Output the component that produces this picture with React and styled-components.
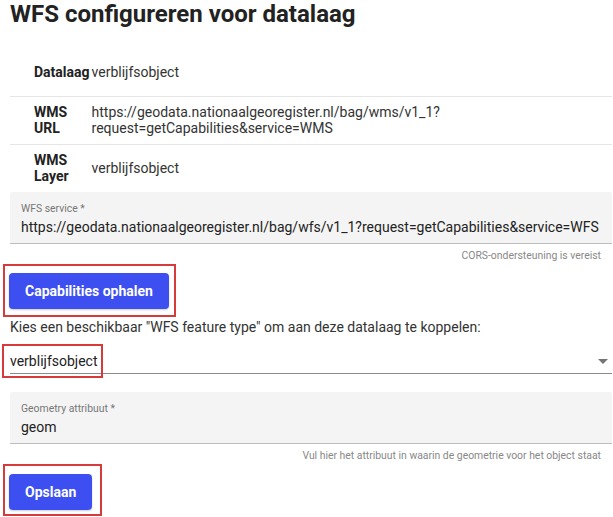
import React from "react";
import styled, { createGlobalStyle } from "styled-components";

const Global = createGlobalStyle`
  html, body { margin: 0; padding: 0; background: #fff; }
  body { font-family: Roboto, "Noto Sans", "Liberation Sans", sans-serif; color: rgba(0,0,0,0.87); }
`;

const Page = styled.div`
  padding: 0 1px 0 10px;
  width: 613px;
  box-sizing: border-box;
`;

const Title = styled.h1`
  margin: 0 0 20px;
  font-size: 24px;
  line-height: 28px;
  font-weight: 700;
  color: #222;
`;

const InfoTable = styled.table`
  width: 100%;
  border-collapse: collapse;
  font-size: 14px;
  line-height: 16px;
`;

const Row = styled.tr`
  height: 48px;
  border-bottom: ${(p) => (p.$last ? "none" : "1px solid #e6e6e6")};
`;

const LabelCell = styled.th`
  text-align: left;
  font-weight: 700;
  padding: 0 2px 0 24px;
  width: 1px;
  white-space: nowrap;
  color: #222;
  vertical-align: middle;
`;

const ValueCell = styled.td`
  padding: 0;
  color: #333;
  vertical-align: middle;
`;

const Field = styled.div`
  background: #f4f4f4;
  border-bottom: 1px solid #bdbdbd;
  padding: 10px 11px 6px;
  border-radius: 3px 3px 0 0;
`;

const FieldLabel = styled.div`
  font-size: 10.4px;
  line-height: 14px;
  color: #777;
  margin-bottom: 1px;
`;

const FieldValue = styled.div`
  font-size: 14px;
  line-height: 20px;
  color: #222;
  white-space: nowrap;
`;

const Helper = styled.div`
  text-align: right;
  font-size: 10.4px;
  line-height: 14px;
  color: #888;
  margin-top: 5px;
  padding-right: 11px;
`;

const Highlight = styled.div`
  display: inline-block;
  margin: 1px 0 0 -7px;
  border: 2px solid #d63a3a;
  padding: ${(p) => p.$pad};
`;

const Button = styled.button`
  display: block;
  border: none;
  border-radius: 4px;
  background: #3d4ff0;
  color: #fff;
  font-family: inherit;
  font-weight: 700;
  font-size: 14px;
  height: 36px;
  padding: 0 16px;
  box-shadow: 0 1px 2px rgba(0,0,0,0.2);
`;

const Instruction = styled.p`
  margin: 0;
  font-size: 14px;
  line-height: 20px;
  color: #333;
`;

const Select = styled.div`
  position: relative;
  margin-top: 8px;
  display: flex;
  align-items: center;
  justify-content: space-between;
  padding: 6px 4px 2px 0;
  border-bottom: 1px solid #8a8a8a;
  font-size: 14px;
  line-height: 20px;
  color: #222;
`;

const SelectMark = styled.div`
  position: absolute;
  left: -8px;
  top: -1px;
  width: 101px;
  height: 34px;
  border: 2px solid #d63a3a;
  box-sizing: border-box;
`;

const Arrow = styled.span`
  width: 0;
  height: 0;
  border-left: 5px solid transparent;
  border-right: 5px solid transparent;
  border-top: 5px solid #757575;
`;

const Spacer = styled.div`
  height: ${(p) => p.$h}px;
`;

export default function App() {
  return (
    <Page>
      <Global />
      <Title>WFS configureren voor datalaag</Title>
      <InfoTable>
        <tbody>
          <Row>
            <LabelCell>Datalaag</LabelCell>
            <ValueCell>verblijfsobject</ValueCell>
          </Row>
          <Row>
            <LabelCell>
              WMS
              <br />
              URL
            </LabelCell>
            <ValueCell>
              https://geodata.nationaalgeoregister.nl/bag/wms/v1_1?
              <br />
              request=getCapabilities&amp;service=WMS
            </ValueCell>
          </Row>
          <Row $last>
            <LabelCell>
              WMS
              <br />
              Layer
            </LabelCell>
            <ValueCell>verblijfsobject</ValueCell>
          </Row>
        </tbody>
      </InfoTable>
      <Field>
        <FieldLabel>WFS service *</FieldLabel>
        <FieldValue>
          https://geodata.nationaalgeoregister.nl/bag/wfs/v1_1?request=getCapabilities&amp;service=WFS
        </FieldValue>
      </Field>
      <Helper>CORS-ondersteuning is vereist</Helper>
      <Highlight $pad="7px 5px 6px 4px">
        <Button>Capabilities ophalen</Button>
      </Highlight>
      <Instruction>
        Kies een beschikbaar "WFS feature type" om aan deze datalaag te koppelen:
      </Instruction>
      <Select>
        <span>verblijfsobject</span>
        <Arrow />
        <SelectMark />
      </Select>
      <Spacer $h={18} />
      <Field>
        <FieldLabel>Geometry attribuut *</FieldLabel>
        <FieldValue>geom</FieldValue>
      </Field>
      <Helper>Vul hier het attribuut in waarin de geometrie voor het object staat</Helper>
      <Highlight $pad="8px 8px 4px 4px">
        <Button>Opslaan</Button>
      </Highlight>
    </Page>
  );
}
